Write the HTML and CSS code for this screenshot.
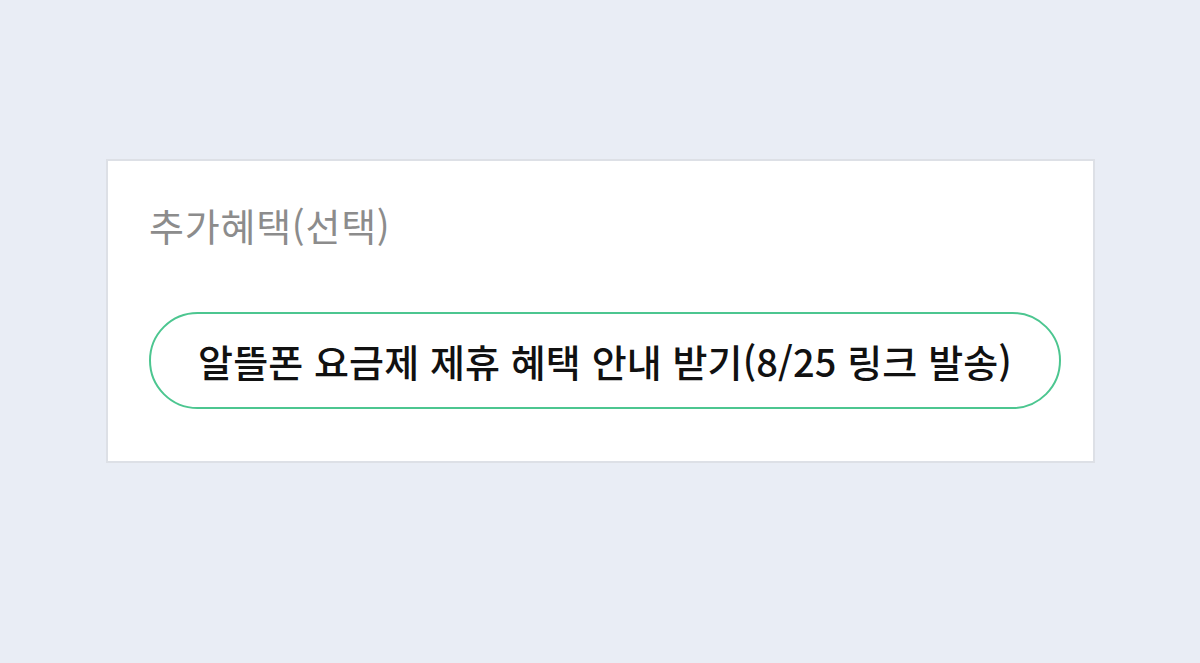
FILE: index.html
```html
<!DOCTYPE html>
<html lang="ko">
<head>
<meta charset="utf-8">
<link rel="stylesheet" href="styles.css">
</head>
<body>
<div class="page">
  <section class="card">
    <h2 class="title">추가혜택(선택)</h2>
    <button class="pill" type="button">알뜰폰 요금제 제휴 혜택 안내 받기(8/25 링크 발송)</button>
  </section>
</div>
</body>
</html>
```

FILE: styles.css
```css
* { box-sizing: border-box; }
html, body { margin: 0; padding: 0; }
body {
  background: #e9edf5;
  font-family: "Noto Sans CJK KR", "Noto Sans", sans-serif;
  width: 1200px;
  height: 663px;
  overflow: hidden;
}
.page {
  padding: 159px 105px 0 106px;
}
.card {
  background: #ffffff;
  border: 2px solid #dde0e6;
  height: 304px;
  padding: 38px 33px 0 41px;
}
.title {
  margin: 0;
  font-size: 38px;
  font-weight: 400;
  color: #8c8c8c;
  line-height: 52px;
  letter-spacing: 0.75px;
}
.pill {
  display: flex;
  align-items: center;
  justify-content: center;
  width: 912px;
  height: 97px;
  margin-top: 61px;
  border: 2px solid #4cc690;
  border-radius: 49px;
  background: #ffffff;
  font-family: inherit;
  font-size: 38px;
  font-weight: 500;
  color: #111111;
  letter-spacing: 0.1px;
  padding: 0;
}
```
